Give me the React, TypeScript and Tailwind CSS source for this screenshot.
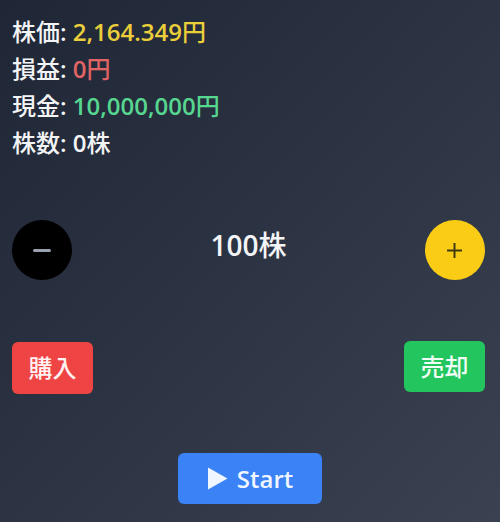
import React, { useState } from 'react';

// ─── Helpers ──────────────────────────────────────────────────────────────────

// Latin glyphs read semibold in the design, CJK glyphs only medium
function Mixed({ text }: { text: string }) {
  const parts = text.match(/[\u3000-\u9fff]+|[^\u3000-\u9fff]+/g) ?? [];
  return (
    <>
      {parts.map((p, i) =>
        /[\u3000-\u9fff]/.test(p) ? (
          <span key={i} className="font-medium">
            {p}
          </span>
        ) : (
          <span key={i}>{p}</span>
        ),
      )}
    </>
  );
}

// ─── Stat Row ─────────────────────────────────────────────────────────────────

function StatRow({ label, value, color }: { label: string; value: string; color: string }) {
  return (
    <p className="leading-[37px]">
      <span className="text-gray-100">
        <Mixed text={`${label}: `} />
      </span>
      <span className={color}>
        <Mixed text={value} />
      </span>
    </p>
  );
}

// ─── App ──────────────────────────────────────────────────────────────────────

export default function App() {
  const [qty, setQty] = useState(100);

  return (
    <div
      className="min-h-screen w-full bg-linear-to-br from-[#1f2636] to-[#3a4252] px-[12px] pt-[13px] pb-[16px] text-[24px] font-semibold text-white"
      style={{ fontFamily: '"Open Sans", "Noto Sans CJK JP", sans-serif' }}
    >
      {/* Stats */}
      <div className="flex flex-col">
        <StatRow label="株価" value="2,164.349円" color="text-[#ebcf3a]" />
        <StatRow label="損益" value="0円" color="text-[#e06464]" />
        <StatRow label="現金" value="10,000,000円" color="text-[#56d68f]" />
        <StatRow label="株数" value="0株" color="text-gray-100" />
      </div>

      {/* Quantity */}
      <div className="mt-[59px] flex items-center justify-between pr-[3px]">
        <button
          type="button"
          onClick={() => setQty((v) => Math.max(0, v - 100))}
          className="flex h-[60px] w-[60px] items-center justify-center rounded-full bg-black"
          aria-label="decrease"
        >
          <span className="block h-[3px] w-[18px] rounded-sm bg-gray-400" />
        </button>
        <span className="pb-[10px] text-[28px] text-gray-100">
          <Mixed text={`${qty}株`} />
        </span>
        <button
          type="button"
          onClick={() => setQty((v) => v + 100)}
          className="flex h-[60px] w-[60px] items-center justify-center rounded-full bg-[#facc15]"
          aria-label="increase"
        >
          <svg width="17" height="17" viewBox="0 0 17 17" aria-hidden="true">
            <path d="M8.5 1v15M1 8.5h15" stroke="#3f3a10" strokeWidth="2" />
          </svg>
        </button>
      </div>

      {/* Trade */}
      <div className="mt-[62px] flex items-center justify-between pr-[3px]">
        <button
          type="button"
          className="mb-[-2px] w-[81px] rounded-md bg-[#ef4444] py-[8px] leading-[36px] font-medium text-red-50"
        >
          購入
        </button>
        <button
          type="button"
          className="mt-[-2px] w-[81px] rounded-md bg-[#22c55e] py-[8px] leading-[35px] font-medium text-green-50"
        >
          売却
        </button>
      </div>

      {/* Start */}
      <div className="mt-[61px] flex justify-center">
        <button
          type="button"
          className="flex h-[51px] w-[144px] items-center justify-center gap-[9px] rounded-md bg-[#3b82f6] text-blue-50"
        >
          <svg width="21" height="23" viewBox="0 0 21 23" aria-hidden="true">
            <path d="M1 0.5L20.5 11.5L1 22.5Z" fill="currentColor" />
          </svg>
          <span>Start</span>
        </button>
      </div>
    </div>
  );
}
